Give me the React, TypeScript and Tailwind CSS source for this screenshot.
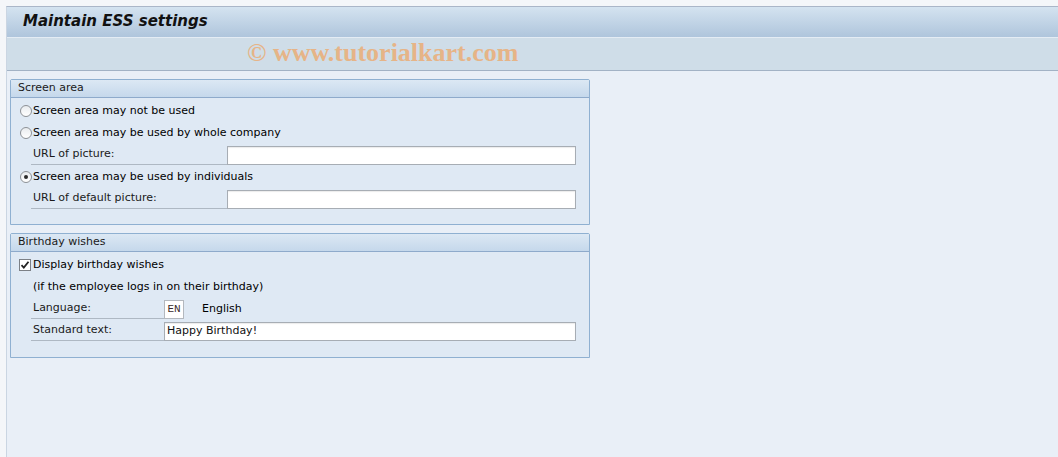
import React from 'react';

const uiFont = { fontFamily: '"DejaVu Sans", Verdana, sans-serif' };

const Radio = ({ checked }: { checked?: boolean }) => (
  <span className="relative inline-flex w-[12px] h-[12px] rounded-full border border-[#8d9196] bg-gradient-to-b from-[#e9ecef] to-white items-center justify-center shrink-0">
    {checked && <span className="w-[4px] h-[4px] rounded-full bg-[#2b2b2b]" />}
  </span>
);

const Checkbox = ({ checked }: { checked?: boolean }) => (
  <span className="inline-flex w-[12px] h-[12px] border border-[#7c8086] bg-white items-center justify-center shrink-0">
    {checked && (
      <svg width="10" height="10" viewBox="0 0 10 10">
        <path d="M1.5 5.2 L3.8 7.6 L8.5 1.8" fill="none" stroke="#222" strokeWidth="1.8" />
      </svg>
    )}
  </span>
);

const FieldLabel = ({ text, width }: { text: string; width: string }) => (
  <div className={`${width} h-[19px] flex items-center pl-[2px] border-b border-[#aeb8c3] text-[#1a1a1a]`}>
    {text}
  </div>
);

const TextInput = ({ width, value }: { width: string; value?: string }) => (
  <div
    className={`${width} h-[19px] bg-white border border-[#a7adb4] shadow-[inset_0_1px_1px_rgba(0,0,0,0.08)] flex items-center px-[2px] text-[#111]`}
  >
    {value}
  </div>
);

const GroupBox = ({ title, children }: { title: string; children: React.ReactNode }) => (
  <div className="w-[580px] border border-[#8fb0d1] rounded-t-[2px] bg-[#dfe9f4]">
    <div className="h-[18px] flex items-center pl-[7px] bg-gradient-to-b from-[#dce8f4] to-[#c5d8eb] border-b border-[#8eaacb] text-[#1a1a1a]">
      {title}
    </div>
    {children}
  </div>
);

export default function App() {
  return (
    <div className="w-full h-[457px] bg-[#f4f6f9] pt-[6px] pl-[6px] overflow-hidden text-[11px]" style={uiFont}>
      <div className="h-full border-t border-l border-[#aab6c8] border-l-[#cad5e2] flex flex-col bg-[#e9eff7]">
        {/* title bar */}
        <div className="h-[31px] bg-gradient-to-b from-[#d4e3f0] to-[#afc5dc] flex items-center pl-[16px] border-b border-[#e4ecf4]">
          <h1 className="text-[15px] font-bold italic text-[#111] -mt-[1px]">Maintain ESS settings</h1>
        </div>
        {/* toolbar band */}
        <div className="h-[33px] bg-[#cfdde8] border-b border-[#a2b2c5] flex items-center pl-[240px] pb-[3px]">
          <span
            className="text-[26px] leading-none font-bold text-[#e6b487]"
            style={{ fontFamily: '"Liberation Serif", "Times New Roman", serif' }}
          >
            © www.tutorialkart.com
          </span>
        </div>

        <div className="pl-[3px] pt-[8px] flex flex-col gap-[8px]">
          <GroupBox title="Screen area">
            <div className="pt-[2px] pb-[14px]">
              <div className="h-[22px] flex items-center pl-[9px] gap-[1px]">
                <Radio />
                <span>Screen area may not be used</span>
              </div>
              <div className="h-[22px] flex items-center pl-[9px] gap-[1px]">
                <Radio />
                <span>Screen area may be used by whole company</span>
              </div>
              <div className="h-[22px] flex items-center pl-[20px]">
                <FieldLabel text="URL of picture:" width="w-[196px]" />
                <TextInput width="w-[349px]" />
              </div>
              <div className="h-[22px] flex items-center pl-[9px] gap-[1px]">
                <Radio checked />
                <span>Screen area may be used by individuals</span>
              </div>
              <div className="h-[22px] flex items-center pl-[20px]">
                <FieldLabel text="URL of default picture:" width="w-[196px]" />
                <TextInput width="w-[349px]" />
              </div>
            </div>
          </GroupBox>

          <GroupBox title="Birthday wishes">
            <div className="pt-[2px] pb-[15px]">
              <div className="h-[22px] flex items-center pl-[8px] gap-[2px]">
                <Checkbox checked />
                <span>Display birthday wishes</span>
              </div>
              <div className="h-[22px] flex items-center pl-[22px]">(if the employee logs in on their birthday)</div>
              <div className="h-[22px] flex items-center pl-[20px]">
                <FieldLabel text="Language:" width="w-[133px]" />
                <div
                  className="w-[20px] h-[19px] bg-white border border-[#b3b8be] flex items-center justify-center text-[11px] text-[#3a2a2a]"
                  style={{ fontFamily: '"Liberation Mono", "Courier New", monospace' }}
                >
                  EN
                </div>
                <span className="ml-[18px]">English</span>
              </div>
              <div className="h-[22px] flex items-center pl-[20px]">
                <FieldLabel text="Standard text:" width="w-[133px]" />
                <TextInput width="w-[412px]" value="Happy Birthday!" />
              </div>
            </div>
          </GroupBox>
        </div>
      </div>
    </div>
  );
}
